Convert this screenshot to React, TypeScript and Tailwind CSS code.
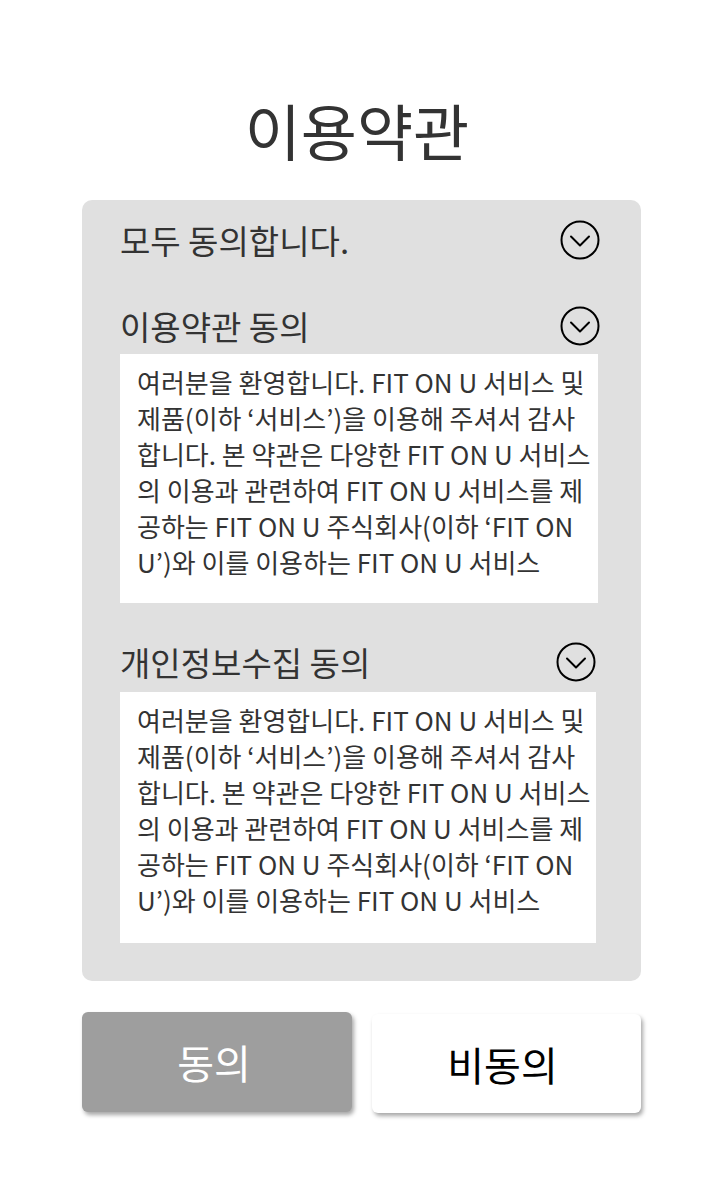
import React from "react";

const FONT = { fontFamily: '"Noto Sans CJK KR", "Noto Sans", sans-serif' };

const terms = [
  "여러분을 환영합니다. FIT ON U 서비스 및",
  "제품(이하 ‘서비스’)을 이용해 주셔서 감사",
  "합니다. 본 약관은 다양한 FIT ON U 서비스",
  "의 이용과 관련하여 FIT ON U 서비스를 제",
  "공하는 FIT ON U 주식회사(이하 ‘FIT ON",
  "U’)와 이를 이용하는 FIT ON U 서비스",
];

function ChevronCircle() {
  return (
    <svg width="40" height="40" viewBox="0 0 40 40" fill="none">
      <circle cx="20" cy="20" r="18.5" stroke="#000" strokeWidth="2" />
      <polyline
        points="11,16.5 20,25.5 29,16.5"
        stroke="#000"
        strokeWidth="2"
        strokeLinecap="round"
        strokeLinejoin="round"
      />
    </svg>
  );
}

function Row({ label, className = "" }: { label: string; className?: string }) {
  return (
    <div className={`flex h-[40px] items-center justify-between ${className}`}>
      <span className="text-[33px] leading-none text-[#333]">{label}</span>
      <ChevronCircle />
    </div>
  );
}

function TermsBox({ className = "" }: { className?: string }) {
  return (
    <div className={`bg-white pl-[17px] pt-[10px] ${className}`}>
      {terms.map((line) => (
        <div key={line} className="whitespace-nowrap text-[26px] leading-[36px] text-[#333]">
          {line}
        </div>
      ))}
    </div>
  );
}

export default function App() {
  return (
    <div className="min-h-[1200px] w-[720px] bg-white" style={FONT}>
      <h1 className="pr-[6px] pt-[98px] text-center text-[61px] font-normal leading-[64px] text-[#333]">
        이용약관
      </h1>

      <div className="ml-[82px] mt-[38px] w-[559px] rounded-[10px] bg-[#e0e0e0] pb-[38px] pl-[38px] pr-[41px] pt-[20px]">
        <Row label="모두 동의합니다." />
        <Row label="이용약관 동의" className="mt-[46px]" />
        <TermsBox className="mt-[8px] h-[249px] w-[478px]" />
        <Row label="개인정보수집 동의" className="mt-[39px] pr-[4px]" />
        <TermsBox className="mt-[10px] h-[251px] w-[476px]" />
      </div>

      <div className="ml-[82px] mt-[31px] flex gap-[20px]">
        <button className="flex h-[100px] w-[270px] items-center justify-center rounded-[6px] bg-[#9e9e9e] pr-[6px] text-[40px] text-white shadow-[2px_3px_4px_rgba(0,0,0,0.35)]">
          동의
        </button>
        <button className="mt-[2px] flex h-[99px] w-[269px] items-center justify-center rounded-[6px] bg-white pr-[8px] text-[40px] text-black shadow-[2px_3px_4px_rgba(0,0,0,0.35)]">
          비동의
        </button>
      </div>
    </div>
  );
}
